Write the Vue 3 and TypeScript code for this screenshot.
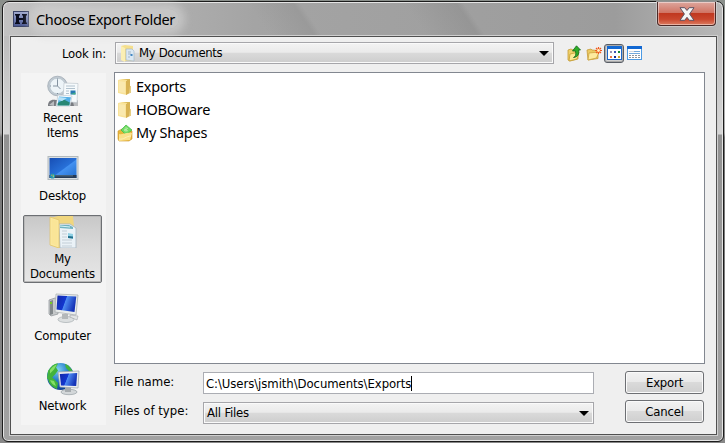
<script setup lang="ts">
import { ref } from 'vue'

interface Place { id: string; lines: string[] }

const places: Place[] = [
  { id: 'recent', lines: ['Recent', 'Items'] },
  { id: 'home', lines: ['Desktop'] },
  { id: 'documents', lines: ['My', 'Documents'] },
  { id: 'computer', lines: ['Computer'] },
  { id: 'network', lines: ['Network'] },
]
const files: string[] = ['Exports', 'HOBOware', 'My Shapes']
const selected = ref('documents')
const path = ref('C:\\Users\\jsmith\\Documents\\Exports')
</script>

<template>
  <div class="backdrop">
    <div class="window">
      <header class="titlebar">
        <svg class="logo" width="16" height="16" viewBox="0 0 16 16">
          <defs>
            <linearGradient id="lg" x1="0" y1="0" x2="0" y2="1"><stop offset="0" stop-color="#a3acd0" /><stop offset=".5" stop-color="#7582b5" /><stop offset="1" stop-color="#46538c" /></linearGradient>
          </defs>
          <rect x=".5" y=".5" width="15" height="15" fill="url(#lg)" stroke="#3b4468" />
          <path d="M2 3h5v1.500H6V7h4V4.500H9V3h5v1.500h-1v7h1V13H9v-1.500h1V9H6v2.500h1V13H2v-1.500h1v-7H2z" fill="#0a0d20" />
        </svg>
        <span class="title">Choose Export Folder</span>
        <button class="close">
          <svg width="16" height="14" viewBox="0 0 16 14">
            <path d="M1 .7h4.700L8 3.500 10.300.7H15L10.600 7l4.400 6.300h-4.700L8 10.300l-2.300 3H1L5.400 7z" fill="#f5f5f5" stroke="#5b5262" stroke-width="1" />
          </svg>
        </button>
      </header>

      <main class="client">
        <div class="toolbar">
          <label class="look">Look in:</label>
          <div class="combo look-combo">
            <svg width="16" height="17" viewBox="0 0 16 17">
              <path d="M1 1l4-1 8 1v15H4l-3-1z" fill="#f5df8d" /><path d="M1 1l4 2v14l-4-2z" fill="#fbefb4" />
              <path d="M6 4l6 0 2 2v10l-8-1z" fill="#dbe8f3" stroke="#9fb2c3" stroke-width=".6" />
              <path d="M8 7h3M8 9h3M8 12h2" stroke="#a3b6c8" /><rect x="10.500" y="9" width="2" height="2" fill="#4186c3" />
            </svg>
            <span>My Documents</span>
            <i class="arrow"></i>
          </div>
          <div class="tools">
            <svg width="15" height="17" viewBox="0 0 15 17">
              <path d="M1 5l3-1 2 1 5-1v10l-8 2-2-1z" fill="#efd06a" stroke="#c69d38" stroke-width=".8" />
              <path d="M3 9l9-2-2 7-8 2z" fill="#fbe994" stroke="#c59d35" stroke-width=".8" />
              <path d="M6.500 12.500c2.500-1 2.500-3 2-6.500H5.500L9.500.8 13.500 5h-1.800c.5 4-.7 7-5.200 7.500z" fill="#2eac27" stroke="#14681a" stroke-width=".8" />
            </svg>
            <svg width="16" height="15" viewBox="0 0 16 15">
              <path d="M1 4l4-1 1 1 6 .5v8L2 14z" fill="#ecca62" stroke="#c79b38" stroke-width=".8" />
              <path d="M3 7l10-1-2.500 6L2 14z" fill="#fdeb9e" stroke="#cba440" stroke-width=".8" />
              <path d="M12.500 1v7M9 4.500h7M10 2l5 5M15 2l-5 5" stroke="#f05a20" stroke-width="1.200" /><circle cx="12.500" cy="4.500" r="1.400" fill="#fff3c0" />
            </svg>
            <div class="view-on">
              <svg width="15" height="14" viewBox="0 0 15 14">
                <rect x=".5" y=".5" width="14" height="13" fill="#fff" stroke="#1b67c9" /><rect width="15" height="3" fill="#1268d2" />
                <path d="M3 5h2v2H3z" fill="#9994b4" /><path d="M7 5h2v2H7z" fill="#3d52b4" /><path d="M11 5h2v2h-2z" fill="#178a37" />
                <path d="M3 10h2v2H3z" fill="#f07544" /><path d="M7 10h2v2H7z" fill="#172a94" /><path d="M11 10h2v2h-2z" fill="#cfa12b" />
              </svg>
            </div>
            <svg width="15" height="14" viewBox="0 0 15 14">
              <rect x=".5" y=".5" width="14" height="13" fill="#fff" stroke="#4b9ae4" /><rect width="15" height="3" fill="#1268d2" />
              <path d="M2 5.500h5" stroke="#d4d8df" /><path d="M7 5.500h6M2 7.500h11" stroke="#73a9dc" />
              <path d="M2 9.500h11M2 11.500h11" stroke="#8e949b" stroke-dasharray="2 1" />
            </svg>
          </div>
        </div>

        <div class="body">
          <nav class="places">
            <button v-for="p in places" :key="p.id" class="place" :class="[p.id, { selected: selected === p.id }]" @click="selected = p.id">
              <svg v-if="p.id === 'recent'" width="32" height="32" viewBox="0 0 32 32">
                <path d="M1 31c0-5 3-7 8-6l17-1 5 3v4z" fill="#787b80" />
                <path d="M2 30l5-4v5M26 27l5-2v6h-4z" fill="#b9bcbf" />
                <circle cx="10.500" cy="11" r="9.800" fill="#c0c9d1" stroke="#98a4ad" stroke-width=".7" /><circle cx="10.500" cy="11" r="7.700" fill="#edf4f8" stroke="#a7b6c1" stroke-width=".5" />
                <path d="M10.500 4.500V11H6M10.500 11l3 3" stroke="#8493a0" fill="none" /><path d="M10.500 3.500v1M10.500 18v1M3 11h1M17 11h1" stroke="#7c8d9a" />
                <path d="M17 8l14 .5-1 19-14-1z" fill="#f6fafc" stroke="#b8c1c7" stroke-width=".6" />
                <path d="M19 11h9M19 13.500h9M19 16h3M19 18.500h3" stroke="#a9bbc8" stroke-width=".9" /><path d="M23.500 15.500h5v4h-5z" fill="#2778b4" /><path d="M23.500 19l5-1.500v2z" fill="#43b081" />
                <path d="M11 20l14 1-2 10H9z" fill="#fff" stroke="#b2c0ca" stroke-width=".6" /><path d="M12 21.500l12 .7-1.700 8H10.500z" fill="#53aee5" /><path d="M10.800 28l6-3.500 6 3-.5 3H10.500z" fill="#278775" /><path d="M12 22l8 1-5 3-4-1z" fill="#b6e2f7" />
              </svg>
              <svg v-else-if="p.id === 'home'" width="32" height="32" viewBox="0 0 32 32">
                <defs><linearGradient id="dk" x1="0" y1="0" x2="1" y2="1"><stop offset="0" stop-color="#174eb4" /><stop offset=".52" stop-color="#2770d8" /><stop offset=".55" stop-color="#4391f1" /><stop offset="1" stop-color="#246fcc" /></linearGradient></defs>
                <rect x="1" y="4.500" width="30" height="23" fill="#dbe0e3" stroke="#b3babd" /><rect x="2.500" y="6" width="27" height="20" fill="url(#dk)" />
                <rect x="2.500" y="23" width="27" height="3" fill="#263b55" /><rect x="8" y="23" width="18" height="1.500" fill="#456078" />
                <circle cx="5.500" cy="24" r="2.600" fill="#2192b1" /><path d="M4.300 22.800h1v1h-1z" fill="#ff8c50" /><path d="M5.800 22.800h1v1h-1z" fill="#a7eb5a" /><path d="M5.800 24.300h1v1h-1z" fill="#ffe25d" />
              </svg>
              <svg v-else-if="p.id === 'documents'" width="32" height="32" viewBox="0 0 32 32">
                <path d="M3 2L11 0h15l1 11v21H11L3 29z" fill="#f0d67e" />
                <path d="M12 8l11 0 6 4v20H13z" fill="#eaf2f7" stroke="#a5b4bf" stroke-width=".8" />
                <path d="M13 9h9l4 2v2l-13-1z" fill="#6fb3c0" /><path d="M13 10l10 1" stroke="#d7f1f5" stroke-width="1" />
                <path d="M15 15h5M15 18h5M15 21h5M15 24h10M15 27h10M15 30h10" stroke="#c3ced6" /><path d="M21 17l5 1v5l-5-1z" fill="#8fd0e4" /><path d="M21 20l5 .5v2l-5-.5z" fill="#216f8b" />
                <path d="M3 1l9 3v28L3 29z" fill="#fbe9a0" stroke="#e0c267" stroke-width=".7" /><path d="M4.500 3l6 2v25l-6-2.500z" fill="#fae597" />
              </svg>
              <svg v-else-if="p.id === 'computer'" width="32" height="32" viewBox="0 0 32 32">
                <defs><linearGradient id="scr" x1="0" y1="0" x2="1" y2=".3"><stop offset="0" stop-color="#1428a7" /><stop offset=".48" stop-color="#1337cf" /><stop offset=".52" stop-color="#4e8cf3" /><stop offset="1" stop-color="#1634b7" /></linearGradient></defs>
                <path d="M2 8l6-2 3 1v15l-7 2-2-2z" fill="#c6c9ca" stroke="#8b9195" stroke-width=".7" /><path d="M3 9l3-1v14l-3 1z" fill="#82888b" /><rect x="3" y="10" width="2" height="2" fill="#79cc24" />
                <ellipse cx="19" cy="27.500" rx="8" ry="3" fill="#dcdfe0" stroke="#9ba2a6" stroke-width=".6" /><path d="M15 22h6v5h-6z" fill="#b4b8ba" />
                <path d="M9 2l22 1-2 20-21-3z" fill="#e9ecec" stroke="#a3a9ac" stroke-width=".7" /><path d="M10.500 3.500l18.800 1L27.500 20 9.500 17.500z" fill="url(#scr)" />
                <path d="M23 23l8 1-1 4-7-3z" fill="#e3e5e6" stroke="#969b9e" stroke-width=".5" />
              </svg>
              <svg v-else width="34" height="34" viewBox="0 0 34 34">
                <defs><radialGradient id="gl" cx=".4" cy=".25" r=".8"><stop offset="0" stop-color="#82d2f4" /><stop offset=".5" stop-color="#237ac7" /><stop offset="1" stop-color="#123b8d" /></radialGradient></defs>
                <circle cx="14.500" cy="14.500" r="13.500" fill="url(#gl)" />
                <path d="M2 9C5 4 9 1 12 1.500l-2 4 2 3-3 4-2 2-2 4-4-2zM19 2c4 1 6 4 8 8l-4-1-3-3zM2 17l5-1 5 5-1 6C6 25 3 22 2 17z" fill="#42b33b" />
                <path d="M4 8c3-4 5-5 7-5.500l-3 5-4 4zM4 18l4 1 2 5c-3-1-5-3-6-6z" fill="#85df66" />
                <ellipse cx="23" cy="30" rx="8" ry="2.700" fill="#d3d7d9" stroke="#8c969b" stroke-width=".6" /><path d="M19 25h6v5h-6z" fill="#a6abae" />
                <path d="M12 10l21-1-1 17-18-1z" fill="#eceeee" stroke="#9da5aa" stroke-width=".7" /><path d="M13.800 12l17.400-1-1 13-15.200-.5z" fill="url(#scr)" />
              </svg>
              <span v-for="line in p.lines" :key="line">{{ line }}</span>
            </button>
          </nav>

          <section class="right">
            <ul class="list">
              <li v-for="(f, i) in files" :key="f">
                <svg v-if="i < 2" width="16" height="18" viewBox="0 0 16 18">
                  <path d="M5 1h8v13l-8 2z" fill="#d9b857" /><path d="M1 2l4-1 5 1v15l-5-1-4-1z" fill="#f9e39a" /><path d="M9 3l4-1v13l-4 2z" fill="#d8b354" /><path d="M2 3l6 1v11l-6-1z" fill="#fae9af" /><path d="M13 8h1v7h-2z" fill="#e5cd83" />
                </svg>
                <svg v-else width="16" height="18" viewBox="0 0 16 18">
                  <path d="M1 7l4-2 4 2h6v8l-3 2H2l-1-2z" fill="#e8b63b" stroke="#c9952b" stroke-width=".6" />
                  <path d="M9 1l6 5-6 5-5-5z" fill="#70da63" stroke="#3dba42" stroke-width=".7" /><path d="M9 3v5M7 5l4 2M11 4L7 7" stroke="#c4f3b3" stroke-width=".8" />
                  <path d="M2 10c4 1 6-2 13-1l-2 7-11 1z" fill="#fbe18a" /><path d="M2 15c5 1 7-3 12-3" stroke="#fff1b8" fill="none" />
                </svg>
                <span>{{ f }}</span>
              </li>
            </ul>

            <div class="form">
              <label>File name:</label>
              <div class="field"><span>{{ path }}</span><i class="caret"></i></div>
              <button class="push">Export</button>
              <label>Files of type:</label>
              <div class="combo type-combo"><span>All Files</span><i class="arrow"></i></div>
              <button class="push">Cancel</button>
            </div>
          </section>
        </div>
      </main>
    </div>
  </div>
</template>

<style>
body { margin: 0; overflow: hidden; }
</style>

<style scoped>
* { box-sizing: border-box; }
svg { display: block; flex: none; }
button { font: inherit; color: inherit; letter-spacing: inherit; padding: 0; margin: 0; border: 0; background: none; }
.backdrop {
  width: 725px; height: 443px; padding: 1px 1px 1px 2px;
  background: linear-gradient(#8a8f8b, #b0b0b0 25%, #a8a8a8 30%, #777 31%, #888);
  font: 13px/16px "DejaVu Sans Condensed", "DejaVu Sans", sans-serif; font-stretch: condensed; letter-spacing: -.2px; color: #000;
}
.window {
  height: 441px; padding: 0 5px 5px 6px;
  border: 1px solid #1c1c1c; border-radius: 7px 7px 6px 6px;
  box-shadow: inset 0 0 0 1px #e4e4e4;
  background:
    linear-gradient(56deg, transparent 36%, #92929288 42%, #aaaaaa00 43%, transparent 57%, #8d8d8d88 64%, #aaa0 65%) 0 0 / 100% 34px no-repeat,
    linear-gradient(90deg, #c2c2c2, #a4a4a4 35%, #9c9c9c 85%, #b8b8b8) 0 0 / 100% 34px no-repeat,
    linear-gradient(#bdbdbd 34px, #d6d6d6 132px, #929292 133px, #a2a2a2);
}
.titlebar { display: flex; align-items: flex-start; height: 33px; padding: 0 2px 0 4px; }
.logo { margin-top: 9px; }
.title {
  margin: 7px 0 0 6px; padding: 0 4px 0 1px; border-radius: 10px;
  font: 14.5px/20px "Noto Sans", "Open Sans", sans-serif; letter-spacing: -.36px; white-space: nowrap;
  background: #d2d2d2a0; box-shadow: 0 0 9px 6px #d2d2d2a0;
}
.close {
  display: flex; align-items: center; justify-content: center;
  width: 59px; height: 24px; margin-left: auto; border: 1px solid #4a2a28; border-top: 0; border-radius: 0 0 4px 4px;
  background: linear-gradient(#dda69d, #d07565 46%, #c03820 50%, #c9472e 75%, #dc7c60);
  box-shadow: inset 0 0 0 1px #ffffff70, 0 0 0 1px #d5d5d5a0;
}
.client { height: 399px; margin: 1px 1px 0; border: 1px solid #505050; background: #efefef; box-shadow: 0 0 0 1px #cfcfcf; }
.toolbar { display: flex; height: 35px; padding-top: 5px; }
.look { width: 95px; margin: 4px 9px 0 0; text-align: right; letter-spacing: -.2px; }
.combo {
  display: flex; align-items: center; height: 22px; border: 1px solid #a6a6aa; padding: 0 4px;
  box-shadow: inset 0 0 0 1px #fafafa;
  background: linear-gradient(#f3f3f3, #eaeaea 47%, #dadada 49%, #cdcdcd);
}
.look-combo { width: 439px; gap: 3px; letter-spacing: -.34px; }
.arrow { margin-left: auto; border: 5px solid transparent; border-top-color: #000; border-bottom: 0; }
.tools { display: flex; align-items: center; height: 22px; margin-left: 13px; }
.tools > :nth-child(2) { margin-left: 4px; }
.view-on { display: flex; align-items: center; justify-content: center; width: 20px; height: 19px; margin: 0 3px 0 2px; border: 1px solid #585d65; border-radius: 3px; background: #d0d0d0; box-shadow: inset 0 0 0 1px #aaa; }
.body { display: flex; gap: 8px; padding-left: 10px; }
.places { display: flex; flex-direction: column; align-items: center; width: 85px; height: 352px; margin-top: 1px; padding-right: 2px; background: #f4f4f4; }
.place { display: flex; flex-direction: column; align-items: center; width: 79px; border: 1px solid transparent; line-height: 15px; }
.place svg { margin-bottom: 3px; }
.place.recent { height: 78px; padding-top: 1px; }
.place.home { height: 64px; }
.place.home svg { margin-bottom: 4px; }
.place.documents { height: 68px; }
.place.documents svg { margin-bottom: 3px; }
.place.computer { height: 70px; margin-top: 8px; }
.place.computer svg { margin-bottom: 4px; }
.place.network svg { margin-bottom: 2px; }
.place.selected { border-color: #6c6f73; border-radius: 2px; background: linear-gradient(#c8c8c8, #dbdbdb 50%, #e6e6e6); box-shadow: inset 0 0 0 1px #b9b9b9; }
.right { width: 591px; }
.list { height: 292px; margin: 0; padding: 2px 2px; list-style: none; background: #fff; border: 1px solid #828790; }
.list li { display: flex; align-items: center; gap: 3px; height: 23px; font: 14.5px/23px "Noto Sans", "Open Sans", sans-serif; letter-spacing: -.25px; }
.form { display: grid; grid-template-columns: 89px 391px 80px; grid-template-rows: 22px 23px; row-gap: 7px; column-gap: 0; padding-top: 8px; }
.form .push { width: 79px; height: 23px; margin: -1px 0 0 31px; border: 1px solid #6d6f73; border-radius: 3px; box-shadow: inset 0 0 0 1px #fafafa; background: linear-gradient(#f2f2f2, #e9e9e9 48%, #dadada 50%, #cfcfcf); }
.form label { padding-top: 2px; letter-spacing: 0; }
.field { display: flex; align-items: center; height: 22px; padding: 1px 0 0 2px; border: 1px solid #abadb3; background: #fff; letter-spacing: -.07px; }
.caret { width: 1px; height: 15px; background: #000; }
.type-combo { margin-top: 1px; padding: 0 4px 0 3px; }
</style>
